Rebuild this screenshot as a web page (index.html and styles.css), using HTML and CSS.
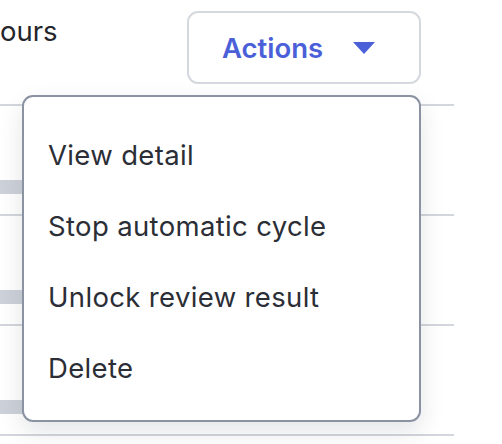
FILE: index.html
```html
<!DOCTYPE html>
<html>
<head>
<meta charset="utf-8">
<link rel="stylesheet" href="styles.css">
</head>
<body>
<div class="page">
  <div class="header">
    <div class="title">ours</div>
    <button class="actions-btn">
      <span class="actions-label">Actions</span>
      <svg class="caret" width="22" height="12" viewBox="0 0 22 12"><path d="M0 0 H22 L11 12 Z" fill="#4b5fd8"/></svg>
    </button>
  </div>
  <div class="rows">
    <div class="row"><div class="bar"></div></div>
    <div class="row"><div class="bar"></div></div>
    <div class="row"><div class="bar"></div></div>
    <div class="row last"></div>
  </div>
  <ul class="menu">
    <li class="menu-item">View detail</li>
    <li class="menu-item">Stop automatic cycle</li>
    <li class="menu-item">Unlock review result</li>
    <li class="menu-item">Delete</li>
  </ul>
</div>
</body>
</html>
```

FILE: styles.css
```css
html, body {
  margin: 0;
  padding: 0;
  background: #ffffff;
}
body {
  font-family: Inter, "Noto Sans", sans-serif;
  color: #2a2d34;
}
.page {
  position: relative;
  width: 454px;
  height: 444px;
  overflow: hidden;
}
.header {
  display: flex;
  justify-content: space-between;
  align-items: flex-start;
  width: 421px;
  height: 104px;
  box-sizing: border-box;
  padding-top: 11px;
}
.title {
  font-size: 27.5px;
  line-height: 32px;
  margin-top: 4px;
  color: #24262b;
}
.actions-btn {
  display: flex;
  align-items: center;
  width: 234px;
  height: 73px;
  box-sizing: border-box;
  border: 2px solid #d5d9df;
  border-radius: 11px;
  background: #fff;
  padding: 0 0 0 33px;
  font-family: Inter, "Noto Sans", sans-serif;
  cursor: pointer;
}
.actions-label {
  font-size: 27.5px;
  font-weight: 600;
  color: #4b5fd8;
}
.caret {
  margin-left: 30px;
  margin-top: 1px;
}
.rows {
  display: flex;
  flex-direction: column;
}
.row {
  position: relative;
  height: 110px;
  box-sizing: border-box;
  border-top: 2px solid #d3d6dc;
  padding-top: 74px;
}
.row.last {
  height: 10px;
}
.bar {
  width: 200px;
  height: 14px;
  background: #cdd1d9;
}
.menu {
  position: absolute;
  left: 22px;
  top: 95px;
  width: 399px;
  height: 327px;
  box-sizing: border-box;
  margin: 0;
  padding: 23px 0 14px 24px;
  list-style: none;
  background: #fff;
  border: 2px solid #8b93a3;
  border-radius: 11px;
  box-shadow: 0 10px 24px rgba(30, 40, 60, 0.12);
}
.menu-item {
  font-size: 27.5px;
  letter-spacing: 0.35px;
  line-height: 71px;
  height: 71px;
  color: #2b2e36;
}
```
